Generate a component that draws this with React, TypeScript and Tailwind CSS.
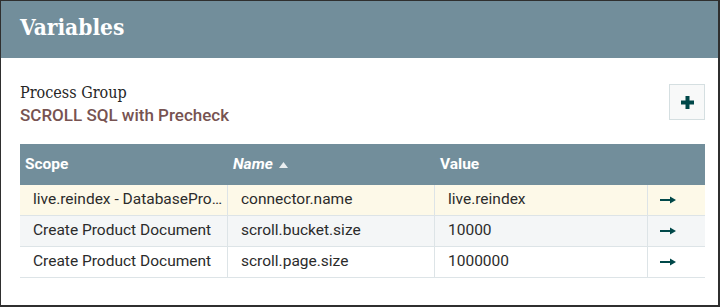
import { ReactNode } from "react";

type Row = { scope: string; name: string; value: string; bg: string };

const rows: Row[] = [
  { scope: "live.reindex - DatabasePro…", name: "connector.name", value: "live.reindex", bg: "bg-[#fdf9e8]" },
  { scope: "Create Product Document", name: "scroll.bucket.size", value: "10000", bg: "bg-[#f4f6f7]" },
  { scope: "Create Product Document", name: "scroll.page.size", value: "1000000", bg: "bg-white" },
];

function Arrow() {
  return (
    <svg width="16" height="8" viewBox="0 0 16 8" className="text-[#004849]">
      <rect x="0" y="3" width="12" height="2" fill="currentColor" />
      <path d="M10 0.5 L16 4 L10 7.5 Z" fill="currentColor" />
    </svg>
  );
}

function Cell({ children }: { children: ReactNode }) {
  return (
    <div className="flex items-center px-[13px] whitespace-nowrap overflow-hidden border-r border-[#dde4e7]">
      {children}
    </div>
  );
}

export default function App() {
  return (
    <div className="w-[720px] h-[307px] bg-white border-l border-t border-r-2 border-b-2 border-[#2f2f2f] flex flex-col overflow-hidden font-['Roboto',sans-serif]">
      {/* dialog header */}
      <div className="h-[57px] shrink-0 bg-[#728e9b] flex items-center px-[19px] pb-[4px]">
        <h1 className="text-white text-[22.5px] font-bold font-['DejaVu_Serif_Condensed','DejaVu_Serif',serif] [font-stretch:condensed]">Variables</h1>
      </div>

      <div className="flex-1 pl-[19px] pr-[13px] pt-[24px]">
        <div className="flex justify-between items-start">
          <div>
            <div className="text-[16px] leading-[21px] text-[#262626] font-['DejaVu_Serif_Condensed','DejaVu_Serif',serif] [font-stretch:condensed] font-light">Process Group</div>
            <div className="text-[17px] leading-[24px] font-medium text-[#775351]">SCROLL SQL with Precheck</div>
          </div>
          <button className="w-[36px] h-[36px] mt-[2px] bg-[#f8f9f9] border border-[#d5dfe1] flex items-center justify-center">
            <svg width="13" height="13" viewBox="0 0 13 13">
              <path d="M4.5 0h4v4.5H13v4H8.5V13h-4V8.5H0v-4h4.5z" fill="#004849" />
            </svg>
          </button>
        </div>

        {/* variables table */}
        <div className="mt-[17px] text-[15.5px] text-[#2b2b2b]">
          <div className="h-[41px] bg-[#728e9b] grid grid-cols-[208px_207px_213px_1fr] text-white font-bold items-center">
            <div className="pl-[5px]">Scope</div>
            <div className="pl-[5px] italic flex items-center gap-[6px]">
              Name
              <svg width="9" height="6" viewBox="0 0 9 6"><path d="M0 6 L4.5 0 L9 6 Z" fill="#fff" opacity="0.85" /></svg>
            </div>
            <div className="pl-[5px]">Value</div>
            <div />
          </div>
          {rows.map((r) => (
            <div key={r.name} className={`h-[31px] grid grid-cols-[208px_207px_213px_1fr] border-b border-[#dde4e7] ${r.bg}`}>
              <Cell>{r.scope}</Cell>
              <Cell>{r.name}</Cell>
              <Cell>{r.value}</Cell>
              <div className="flex items-center pl-[12px]">
                <Arrow />
              </div>
            </div>
          ))}
        </div>
      </div>
    </div>
  );
}
